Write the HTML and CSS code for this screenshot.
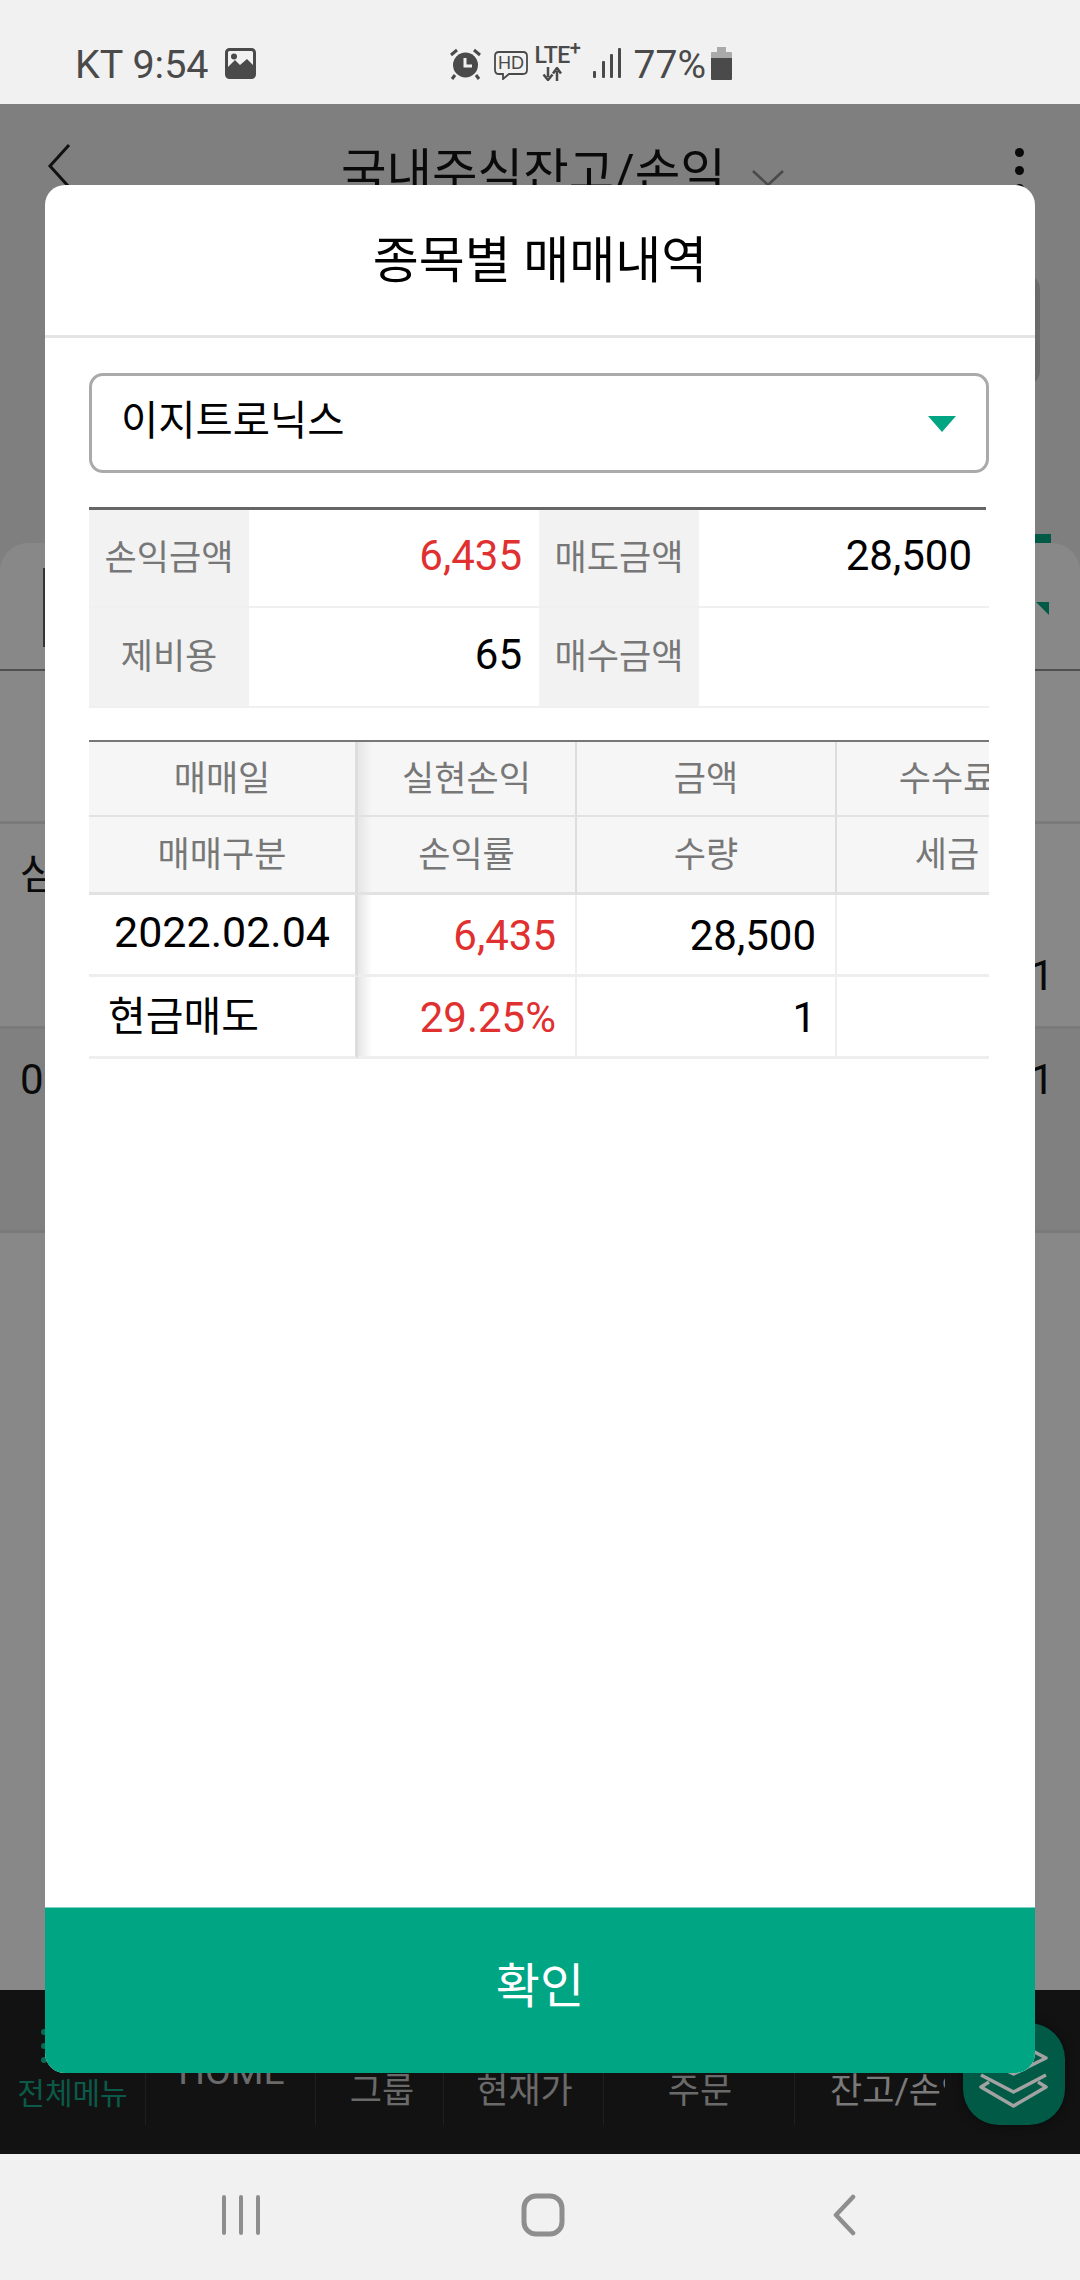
FILE: index.html
```html
<!DOCTYPE html>
<html lang="ko">
<head>
<meta charset="utf-8">
<title>종목별 매매내역</title>
<link rel="stylesheet" href="styles.css">
</head>
<body>
<div class="screen">
  <header class="status">
    <div class="status-left">
      <span class="status-text">KT 9:54</span>
      <svg class="ic-image" width="31" height="31" viewBox="0 0 31 31"><rect x="1.5" y="1.5" width="28" height="28" rx="3" fill="none" stroke="#4a4a4a" stroke-width="3"/><path d="M2 29V20L10 12L15 17L22 11L29 18V29Z" fill="#4a4a4a"/><circle cx="9" cy="8.500" r="3" fill="#4a4a4a"/></svg>
    </div>
    <div class="status-right">
      <svg class="ic-alarm" width="33" height="32" viewBox="0 0 33 32"><circle cx="16.500" cy="17" r="12.500" fill="#4a4a4a"/><path d="M16 10V18H23" fill="none" stroke="#f1f1f1" stroke-width="3"/><path d="M2 7L8 2M31 7L25 2M6 27L3 31M27 27L30 31" stroke="#4a4a4a" stroke-width="3" fill="none"/></svg>
      <svg class="ic-hd" width="34" height="29" viewBox="0 0 34 29"><path d="M5 1H29Q33 1 33 5V19Q33 23 29 23H15L9 28V23H5Q1 23 1 19V5Q1 1 5 1Z" fill="none" stroke="#4a4a4a" stroke-width="1.800"/><text x="17" y="18" text-anchor="middle" class="hd-label">HD</text></svg>
      <div class="lte">
        <span class="lte-text">LTE<sup class="lte-plus">+</sup></span>
        <svg width="22" height="14" viewBox="0 0 22 14"><path d="M7 0V10M2.500 7.500L7 13L11.500 7.500" fill="none" stroke="#4a4a4a" stroke-width="2.500"/><path d="M16 14V4M12 6.500L16 1L20 6.500" fill="none" stroke="#4a4a4a" stroke-width="2.500"/></svg>
      </div>
      <svg class="ic-signal" width="28" height="31" viewBox="0 0 28 31"><g fill="#4a4a4a"><rect x="0" y="23" width="3" height="7" rx="1"/><rect x="9" y="13" width="3" height="17" rx="1"/><rect x="17" y="6" width="3" height="24" rx="1"/><rect x="25" y="0" width="3" height="30" rx="1"/></g></svg>
      <span class="status-text pct">77%</span>
      <svg class="ic-batt" width="21" height="33" viewBox="0 0 21 33"><path d="M6 0H15V5H6Z" fill="#aaa"/><path d="M0 6Q0 5 1 5H20Q21 5 21 6V11H0Z" fill="#aaa"/><path d="M0 11H21V32Q21 33 20 33H1Q0 33 0 32Z" fill="#4a4a4a"/></svg>
    </div>
  </header>

  <main class="app">
    <div class="app-head">
      <svg class="ic-back" width="24" height="46" viewBox="0 0 24 46"><path d="M22 2L3 23L22 44" fill="none" stroke="#111" stroke-width="3"/></svg>
      <h1 class="app-title">국내주식잔고/손익</h1>
      <svg class="ic-caret" width="34" height="18" viewBox="0 0 34 18"><path d="M2 2L17 16L32 2" fill="none" stroke="#4a4a4a" stroke-width="2.500"/></svg>
      <div class="kebab"><i></i><i></i><i></i></div>
    </div>
    <div class="filter-box"></div>
    <div class="tab-strip"><span class="tab-mark"></span></div>
    <section class="card">
      <div class="card-filter"><span class="card-select"></span><span class="card-tri"></span></div>
      <div class="card-head"></div>
      <div class="row"><span class="row-l">삼</span><span class="row-r">1</span></div>
      <div class="row row-dark"><span class="row-l row-l2">0</span><span class="row-r row-r2">1</span></div>
    </section>
  </main>

  <nav class="tabbar">
    <div class="tab tab-menu">
      <span class="dots"><i></i><i></i><i></i></span>
      <span>전체메뉴</span>
    </div>
    <div class="tab tab-home"><span>HOME</span></div>
    <div class="tab tab-group"><span>그룹</span></div>
    <div class="tab tab-price"><span>현재가</span></div>
    <div class="tab tab-order"><span>주문</span></div>
    <div class="tab tab-bal"><span>잔고/손익</span></div>
    <div class="fab">
      <svg width="74" height="74" viewBox="0 0 74 74"><g fill="none" stroke="#a2a2a2" stroke-width="3.500" stroke-linejoin="round"><path d="M36.500 4L69 21L36.500 37L4 21Z"/><path d="M4 38L36.500 55L69 38"/><path d="M12 45L4 50L36.500 69L69 50L61 45"/></g></svg>
    </div>
  </nav>

  <footer class="sysnav">
    <svg width="38" height="40" viewBox="0 0 38 40"><g stroke="#8e8e8e" stroke-width="4" stroke-linecap="round"><path d="M2 2V38M19 2V38M36 2V38"/></g></svg>
    <svg class="ic-home" width="44" height="44" viewBox="0 0 44 44"><rect x="3" y="3" width="38" height="38" rx="12" fill="none" stroke="#8e8e8e" stroke-width="5"/></svg>
    <svg width="24" height="42" viewBox="0 0 24 42"><path d="M21 3L4 21L21 39" fill="none" stroke="#8e8e8e" stroke-width="4.500" stroke-linecap="round" stroke-linejoin="round"/></svg>
  </footer>

  <div class="modal">
    <h2 class="modal-title">종목별 매매내역</h2>
    <div class="modal-body">
      <div class="select"><span>이지트로닉스</span><i class="select-tri"></i></div>

      <div class="summary">
        <div class="s-label">손익금액</div><div class="s-value red">6,435</div>
        <div class="s-label">매도금액</div><div class="s-value">28,500</div>
        <div class="s-label">제비용</div><div class="s-value">65</div>
        <div class="s-label">매수금액</div><div class="s-value"></div>
      </div>

      <div class="history">
        <div class="h-grid">
          <div class="th first r1">매매일</div><div class="th shade r1">실현손익</div><div class="th r1">금액</div><div class="th r1">수수료</div>
          <div class="th first r2">매매구분</div><div class="th shade r2">손익률</div><div class="th r2">수량</div><div class="th r2">세금</div>
          <div class="td first num center">2022.02.04</div><div class="td shade num red">6,435</div><div class="td num">28,500</div><div class="td num"></div>
          <div class="td first kind">현금매도</div><div class="td shade num red">29.25%</div><div class="td num">1</div><div class="td num"></div>
        </div>
      </div>
    </div>
    <button class="confirm" type="button">확인</button>
  </div>
</div>
</body>
</html>
```
FILE: styles.css
```css
* { box-sizing: border-box; }
html, body { margin: 0; padding: 0; }
body { font-family: Roboto, "Noto Sans CJK KR", sans-serif; background: #f1f1f1; }
.screen { position: relative; width: 1080px; height: 2280px; display: flex; flex-direction: column; overflow: hidden; }

/* status bar */
.status { height: 104px; background: #f1f1f1; display: flex; padding: 46px 0 0 75px; gap: 193px; }
.status-left, .status-right { display: flex; align-items: flex-start; }
.status-text { font-size: 39.500px; line-height: 38px; color: #4a4a4a; }
.ic-image { margin: 2px 0 0 16px; }
.ic-hd { margin: 5px 0 0 12px; }
.ic-alarm { margin-top: 2px; }
.hd-label { font: 500 18px "Liberation Sans", sans-serif; fill: #4a4a4a; }
.lte { display: flex; flex-direction: column; align-items: flex-start; margin-left: 7px; width: 50px; }
.lte-text { font: 500 23px/20px Roboto, sans-serif; color: #4a4a4a; height: 21px; white-space: nowrap; letter-spacing: -.5px; }
.lte-plus { font-size: 20px; line-height: 0; vertical-align: 8px; }
.lte svg { margin-left: 6px; }
.ic-signal { margin: 2px 0 0 8px; }
.pct { margin-left: 13px; width: 77px; font-size: 39px; }
.ic-batt { margin-top: 1px; }

/* app behind the dialog */
.app { flex: 1; background: #7f7f7f; position: relative; overflow: hidden; display: flex; flex-direction: column; }
.app-head { height: 81px; flex: none; position: relative; display: flex; padding: 39px 0 0 47px; }
.app-title { margin: 0 0 0 270px; font-size: 49.500px; font-weight: 400; line-height: 60px; color: #0a0a0a; white-space: nowrap; }
.ic-caret { margin: 26px 0 0 25px; }
.ic-back { flex: none; }
.kebab { position: absolute; top: 44px; left: 1015px; display: flex; flex-direction: column; gap: 9px; }
.kebab i { width: 9px; height: 9px; border-radius: 50%; background: #0a0a0a; }
.filter-box { height: 110px; flex: none; margin: 90px 40px 0 60px; border: 5px solid #6a6a6a; border-radius: 14px; }
.tab-strip { height: 158px; flex: none; position: relative; }
.tab-mark { position: absolute; right: 29px; bottom: 0; width: 400px; height: 9px; background: #005a46; }
.card { flex: 1; background: #888; border-radius: 28px 28px 0 0; display: flex; flex-direction: column; }
.card-filter { height: 128px; flex: none; border-bottom: 2px solid #4f4f4f; position: relative; }
.card-select { position: absolute; left: 43px; top: 25px; width: 2px; height: 79px; background: #333; }
.card-tri { position: absolute; right: 31px; top: 59px; border-top: 13px solid #005a46; border-left: 13px solid transparent; }
.card-head { height: 153px; flex: none; border-bottom: 3px solid #7a7a7a; }
.row { height: 205px; flex: none; border-bottom: 3px solid #7a7a7a; display: flex; justify-content: space-between; padding: 0 26px 0 20px; font-size: 42px; line-height: 50px; color: #0a0a0a; }
.row-l { padding-top: 26px; }
.row-r { padding-top: 127px; }
.row-dark { background: #808080; height: 204px; }
.row-l2, .row-r2 { padding-top: 26px; }

/* bottom tabs */
.tabbar { height: 164px; background: #121212; position: relative; display: flex; align-items: flex-start; }
.tab { height: 135px; border-right: 1px solid #1f1f1f; display: flex; flex-direction: column; align-items: center; justify-content: flex-end; padding: 0 0 13px 2px; font-size: 35px; line-height: 40px; color: #6a6a6a; white-space: nowrap; overflow: hidden; flex: none; }
.tab-menu { width: 146px; color: #0b5a49; font-size: 30px; padding: 0 0 11px; position: relative; }
.tab-home { width: 170px; padding-bottom: 34px; font-size: 37.500px; }
.tab-group { width: 128px; padding-left: 5px; }
.tab-price { width: 160px; }
.tab-order { width: 191px; }
.tab-bal { width: 150px; border-right: 0; align-items: flex-start; padding-left: 35px; color: #7a7a7a; }
.dots { position: absolute; left: 41px; top: 39px; display: flex; flex-direction: column; gap: 8px; }
.dots i { width: 6px; height: 6px; border-radius: 50%; background: #0b6a55; }
.fab { position: absolute; left: 963px; top: 33px; width: 102px; height: 102px; border-radius: 36px; background: #005a46; display: flex; align-items: center; justify-content: center; box-shadow: 0 0 10px rgba(0,0,0,.5); }

/* system navigation */
.sysnav { height: 126px; background: #f1f1f1; display: flex; align-items: center; padding: 0 224px 4px 222px; justify-content: space-between; }
.ic-home { margin-left: -6px; }

/* dialog */
.modal { position: absolute; left: 45px; top: 185px; width: 990px; height: 1888px; background: #fff; border-radius: 20px; overflow: hidden; display: flex; flex-direction: column; }
.modal-title { margin: 0; height: 153px; flex: none; border-bottom: 3px solid #e4e4e4; display: flex; align-items: center; justify-content: center; padding-bottom: 8px; font-size: 50px; font-weight: 400; color: #000; }
.modal-body { flex: 1; padding: 35px 46px 0 44px; }
.select { height: 100px; width: 900px; border: 3px solid #aaa; border-radius: 14px; display: flex; align-items: center; justify-content: space-between; padding: 0 30px 12px 29px; font-size: 40.500px; color: #000; }
.select-tri { border-top: 16px solid #00a583; border-left: 14px solid transparent; border-right: 14px solid transparent; margin-top: 14px; }

.summary { margin-top: 34px; width: 900px; padding-top: 3px; background: linear-gradient(#666, #666) 0 0 / 897px 3px no-repeat; display: grid; grid-template-columns: 160px 290px 160px 290px; grid-template-rows: 98px 100px; }
.s-label { background: #f2f2f2; color: #777; font-size: 35px; display: flex; align-items: center; justify-content: center; border-bottom: 2px solid #f0f0f0; padding-bottom: 8px; }
.s-value { font-size: 42px; color: #000; display: flex; align-items: center; justify-content: flex-end; padding: 0 17px 6px 0; border-bottom: 2px solid #f0f0f0; }

.history { margin-top: 32px; width: 900px; overflow: hidden; border-top: 2px solid #777; }
.h-grid { display: grid; width: 970px; grid-template-columns: 269px 219px 260px 222px; grid-template-rows: 75px 78px 82px 82px; }
.th { background: #f6f6f6; color: #777; font-size: 35px; display: flex; align-items: center; justify-content: center; border-right: 2px solid #ddd; border-bottom: 3px solid #e2e2e2; padding-bottom: 6px; }
.td { color: #000; display: flex; align-items: center; border-right: 2px solid #eee; border-bottom: 3px solid #eee; }
.first { border-right: 3px solid #ddd; }
.shade { background-image: linear-gradient(90deg, #e6e6e6, rgba(230,230,230,0) 14px); }
.r1 { border-bottom-width: 2px; }
.num { font-size: 42px; justify-content: flex-end; padding: 1px 19px 0 0; }
.center { font-size: 43px; justify-content: center; padding: 0 0 6px 0; }
.kind { font-size: 41px; padding: 0 0 8px 19px; }
.red { color: #e03030; }

.confirm { height: 166px; flex: none; margin: 0; border: 0; background: #00a583; color: #fff; font-family: inherit; font-size: 48px; padding: 0 0 18px; width: 100%; border-top: 1px solid #7fd2c1; }
```
